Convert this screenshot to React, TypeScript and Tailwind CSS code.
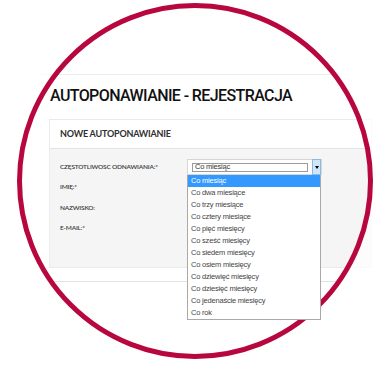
import React from "react";

const options = [
  "Co miesiąc",
  "Co dwa miesiące",
  "Co trzy miesiące",
  "Co cztery miesiące",
  "Co pięć miesięcy",
  "Co sześć miesięcy",
  "Co siedem miesięcy",
  "Co osiem miesięcy",
  "Co dziewięć miesięcy",
  "Co dziesięć miesięcy",
  "Co jedenaście miesięcy",
  "Co rok",
];

function FrequencySelect() {
  return (
    <div className="relative w-[135px] h-[16px] font-normal">
      <div className="flex items-center h-full border border-[#d6d6d6] bg-white pl-[4px]">
        <div className="flex items-center w-[116px] h-[9px] border border-[#9a9a9a] bg-white pl-[2px] text-[7.5px] leading-none text-[#333] font-['Liberation_Sans',sans-serif]">
          Co miesiąc
        </div>
        <div className="ml-auto flex items-center justify-center w-[9px] h-[16px] bg-[#cfe6f8] border border-[#8cbbe0]">
          <span className="block w-0 h-0 border-l-[2.5px] border-r-[2.5px] border-t-[3px] border-l-transparent border-r-transparent border-t-black" />
        </div>
      </div>

      {/* open list */}
      <ul className="absolute left-0 top-full w-[134px] bg-white border border-t-0 border-[#a9a9a9] z-10 font-['Liberation_Sans',sans-serif] font-normal">
        {options.map((o, i) => (
          <li
            key={o}
            className={
              i === 0
                ? "h-[12px] flex items-center pl-[3px] text-[7.5px] text-white bg-[#3399ff]"
                : "h-[12px] flex items-center pl-[3px] text-[7.5px] text-[#444]"
            }
          >
            {o}
          </li>
        ))}
      </ul>
    </div>
  );
}

export default function App() {
  return (
    <div className="relative w-[390px] h-[379px] bg-white overflow-hidden">
      {/* page */}
      <div className="pt-[74px] pl-[38px]">
        <div className="w-[309px] border-t border-[#ececec]" />
        <h1 className="mt-[11px] pl-[12px] text-[16px] leading-[20px] text-[#111] font-['Roboto',sans-serif] font-medium tracking-[-0.6px] whitespace-nowrap">
          AUTOPONAWIANIE - REJESTRACJA
        </h1>

        <div className="mt-[13px] ml-[11px] w-[323px] border border-[#ebebeb]">
          <div className="h-[29px] flex items-center pl-[10px] border-b border-[#e3e3e3] bg-white">
            <span className="text-[9px] font-bold tracking-[-0.2px] text-[#2f2f2f] font-['Lato',sans-serif]">
              NOWE AUTOPONAWIANIE
            </span>
          </div>

          <div className="bg-[#f5f5f5] pl-[10px] pt-[10px] pb-[30px] font-['Lato',sans-serif] text-[6.5px] font-semibold tracking-[-0.2px] text-[#3a3a3a]">
            <div className="flex items-center h-[16px]">
              <span className="w-[127px] whitespace-nowrap">CZĘSTOTLIWOSC ODNAWIANIA:*</span>
              <FrequencySelect />
            </div>
            <div className="flex items-center mt-[2px] h-[20px]">IMIĘ:*</div>
            <div className="flex items-center h-[21px]">NAZWISKO:</div>
            <div className="flex items-center h-[19px]">E-MAIL:*</div>
          </div>
        </div>

        <div className="mt-[13px] ml-[14px] w-[295px] border-t border-[#e2e2e2]" />
      </div>

      {/* fade outside the frame */}
      <div className="absolute inset-0 pointer-events-none bg-[radial-gradient(circle_at_195px_181px,transparent_176px,rgba(255,255,255,0.75)_177px)]" />

      {/* round frame */}
      <div className="absolute left-[17px] top-[3px] w-[356px] h-[356px] rounded-full border-[5px] border-[#b8073e] pointer-events-none" />
    </div>
  );
}
